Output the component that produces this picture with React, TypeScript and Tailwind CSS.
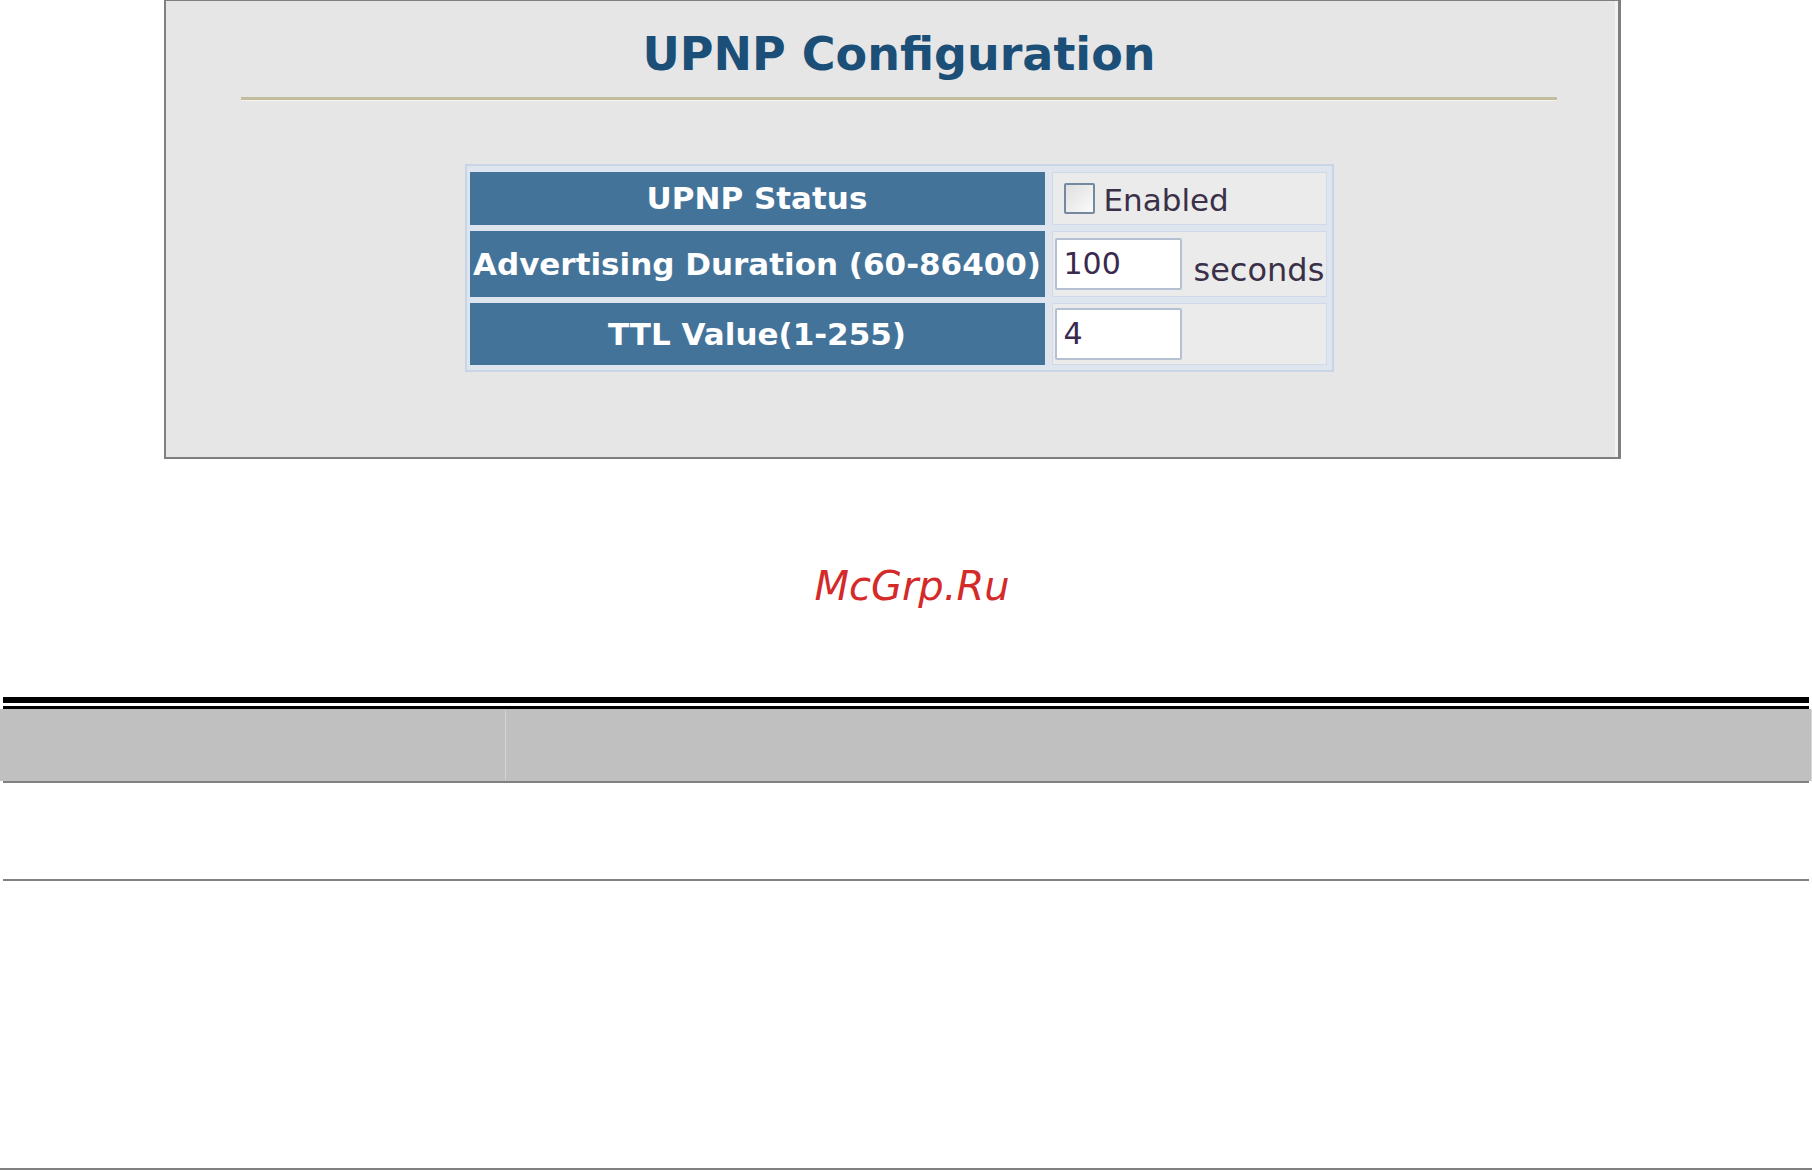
import React from 'react';

const labelCls =
  'bg-[#44739a] flex items-center justify-center text-white font-bold text-[31px] leading-none whitespace-nowrap';
const valueCls = 'bg-[#ebebeb] border border-[#cfd9e8] flex items-center';

const InputBox: React.FC<{ value: string }> = ({ value }) => (
  <div className="ml-[2px] w-[127px] h-[52px] bg-white border-2 border-[#b3c1d3] rounded-[2px] flex items-center pl-[7px] text-[30px] leading-none text-[#3a2a4e]">
    {value}
  </div>
);

export default function App() {
  return (
    <div className="w-[1812px] h-[1170px] bg-white overflow-hidden font-['DejaVu_Sans',Verdana,sans-serif]">
      {/* screenshot panel */}
      <div className="ml-[164px] w-[1457px] h-[459px] bg-[#e6e6e6] border-t border-l-2 border-r-[3px] border-b-2 border-[#7f7f7f]">
        <div className="h-full border-r-[3px] border-[#f3f3f3] pl-[75px] pr-[58px] pt-[30px]">
          <h1 className="text-center text-[46px] leading-none font-bold text-[#1c4f77] h-[46px]">
            UPNP Configuration
          </h1>
          <div className="mt-[20px] h-[3px] bg-[#c3bd9f] shadow-[0_1px_0_#f4f3ec]" />

          <div className="mt-[64px] mx-auto w-[869px] bg-[#dfe5ee] border-2 border-[#c9d5e7] pt-[6px] pb-[5px] pl-[3px] pr-[5px]">
            <div className="grid grid-cols-[575px_275px] gap-x-[7px] gap-y-[6px]">
              <div className={`${labelCls} h-[53px]`}>UPNP Status</div>
              <div className={`${valueCls} h-[53px] pl-[11px]`}>
                <div className="w-[31px] h-[31px] border-2 border-[#74889f] rounded-[2px] bg-gradient-to-br from-[#e0e0e0] to-[#fafafa]" />
                <span className="ml-[9px] mt-[4px] text-[31px] leading-none text-[#3a3048]">Enabled</span>
              </div>

              <div className={`${labelCls} h-[66px]`}>Advertising Duration (60-86400)</div>
              <div className={`${valueCls} h-[66px]`}>
                <InputBox value="100" />
                <span className="ml-[12px] mt-[12px] text-[32px] leading-none text-[#3a3048]">seconds</span>
              </div>

              <div className={`${labelCls} h-[62px]`}>TTL Value(1-255)</div>
              <div className={`${valueCls} h-[62px]`}>
                <InputBox value="4" />
              </div>
            </div>
          </div>
        </div>
      </div>

      {/* watermark */}
      <div className="mt-[107px] h-[40px] text-center pl-[12px] text-[40px] leading-none italic text-[#d42a2a]">
        McGrp.Ru
      </div>

      {/* parameter table */}
      <div className="mt-[91px]">
        <div className="mx-[3px] h-[6px] bg-black" />
        <div className="mx-[3px] mt-[3px] h-[3px] bg-black" />
        <div className="h-[72px] bg-[#c0c0c0] border-r border-[#d6d6d6] flex">
          <div className="w-[506px] border-r border-[#d4d4d4] my-[1px]" />
          <div className="flex-1" />
        </div>
        <div className="mx-[3px] h-[2px] bg-[#808080]" />
        <div className="h-[96px]" />
        <div className="mx-[3px] h-[2px] bg-[#808080]" />
        <div className="h-[287px]" />
        <div className="h-[2px] bg-[#808080]" />
      </div>
    </div>
  );
}
